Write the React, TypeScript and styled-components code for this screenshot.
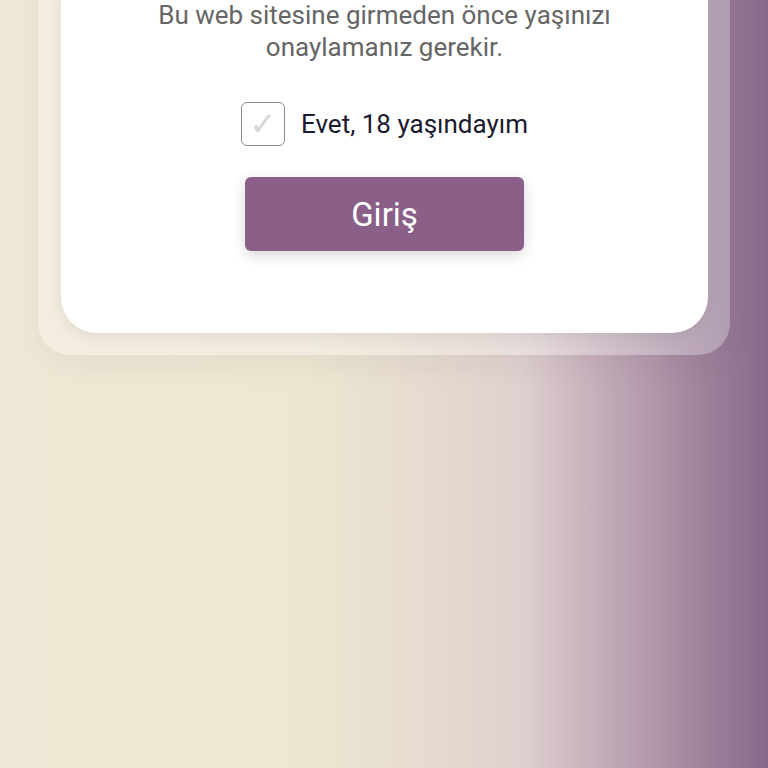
import React from "react";
import styled, { createGlobalStyle } from "styled-components";

const Global = createGlobalStyle`
  html, body { margin: 0; padding: 0; }
  body {
    font-family: Roboto, "Noto Sans", Arial, sans-serif;
    min-height: 100vh;
    background: linear-gradient(to right, #f0e8d6 0%, #ede7d1 40%, #e4d9cf 58%, #dfd0cf 68%, #c4aeba 78%, #a88ea3 88%, #86698a 100%);
    overflow: hidden;
  }
`;

const Page = styled.div`
  min-height: 768px;
  display: flex;
  justify-content: center;
  align-items: flex-start;
`;

const Frame = styled.div`
  margin-top: -63px;
  width: 692px;
  box-sizing: border-box;
  padding: 22px 22px 22px 23px;
  border-radius: 32px;
  background: rgba(255, 255, 255, 0.28);
  box-shadow: 0 10px 30px rgba(60, 40, 60, 0.06);
`;

const Card = styled.div`
  background: #ffffff;
  border-radius: 36px;
  padding: 40px 40px 82px;
  display: flex;
  flex-direction: column;
  align-items: center;
  box-shadow: 0 4px 18px rgba(0, 0, 0, 0.08);
`;

const Message = styled.p`
  margin: 0;
  font-size: 26px;
  line-height: 32px;
  color: #666666;
  text-align: center;
  max-width: 500px;
`;

const CheckRow = styled.label`
  margin-top: 39px;
  display: flex;
  align-items: center;
  gap: 16px;
  cursor: pointer;
`;

const Box = styled.span`
  width: 44px;
  height: 44px;
  box-sizing: border-box;
  border: 1.5px solid #8a8a8a;
  border-radius: 6px;
  display: flex;
  align-items: center;
  justify-content: center;
  color: #d6d6d6;
  font-size: 32px;
  line-height: 1;
  font-family: "DejaVu Sans", sans-serif;
`;

const LabelText = styled.span`
  font-size: 26px;
  color: #1c1a2e;
`;

const Button = styled.button`
  margin-top: 31px;
  width: 279px;
  height: 74px;
  border: none;
  border-radius: 6px;
  background: #8a5f88;
  color: #ffffff;
  font-family: Roboto, "Noto Sans", Arial, sans-serif;
  font-size: 33px;
  box-shadow: 0 4px 14px rgba(0, 0, 0, 0.16);
  cursor: pointer;
`;

export default function App() {
  return (
    <>
      <Global />
      <Page>
        <Frame>
          <Card>
            <Message>Bu web sitesine girmeden önce yaşınızı onaylamanız gerekir.</Message>
            <CheckRow>
              <Box>✓</Box>
              <LabelText>Evet, 18 yaşındayım</LabelText>
            </CheckRow>
            <Button>Giriş</Button>
          </Card>
        </Frame>
      </Page>
    </>
  );
}
